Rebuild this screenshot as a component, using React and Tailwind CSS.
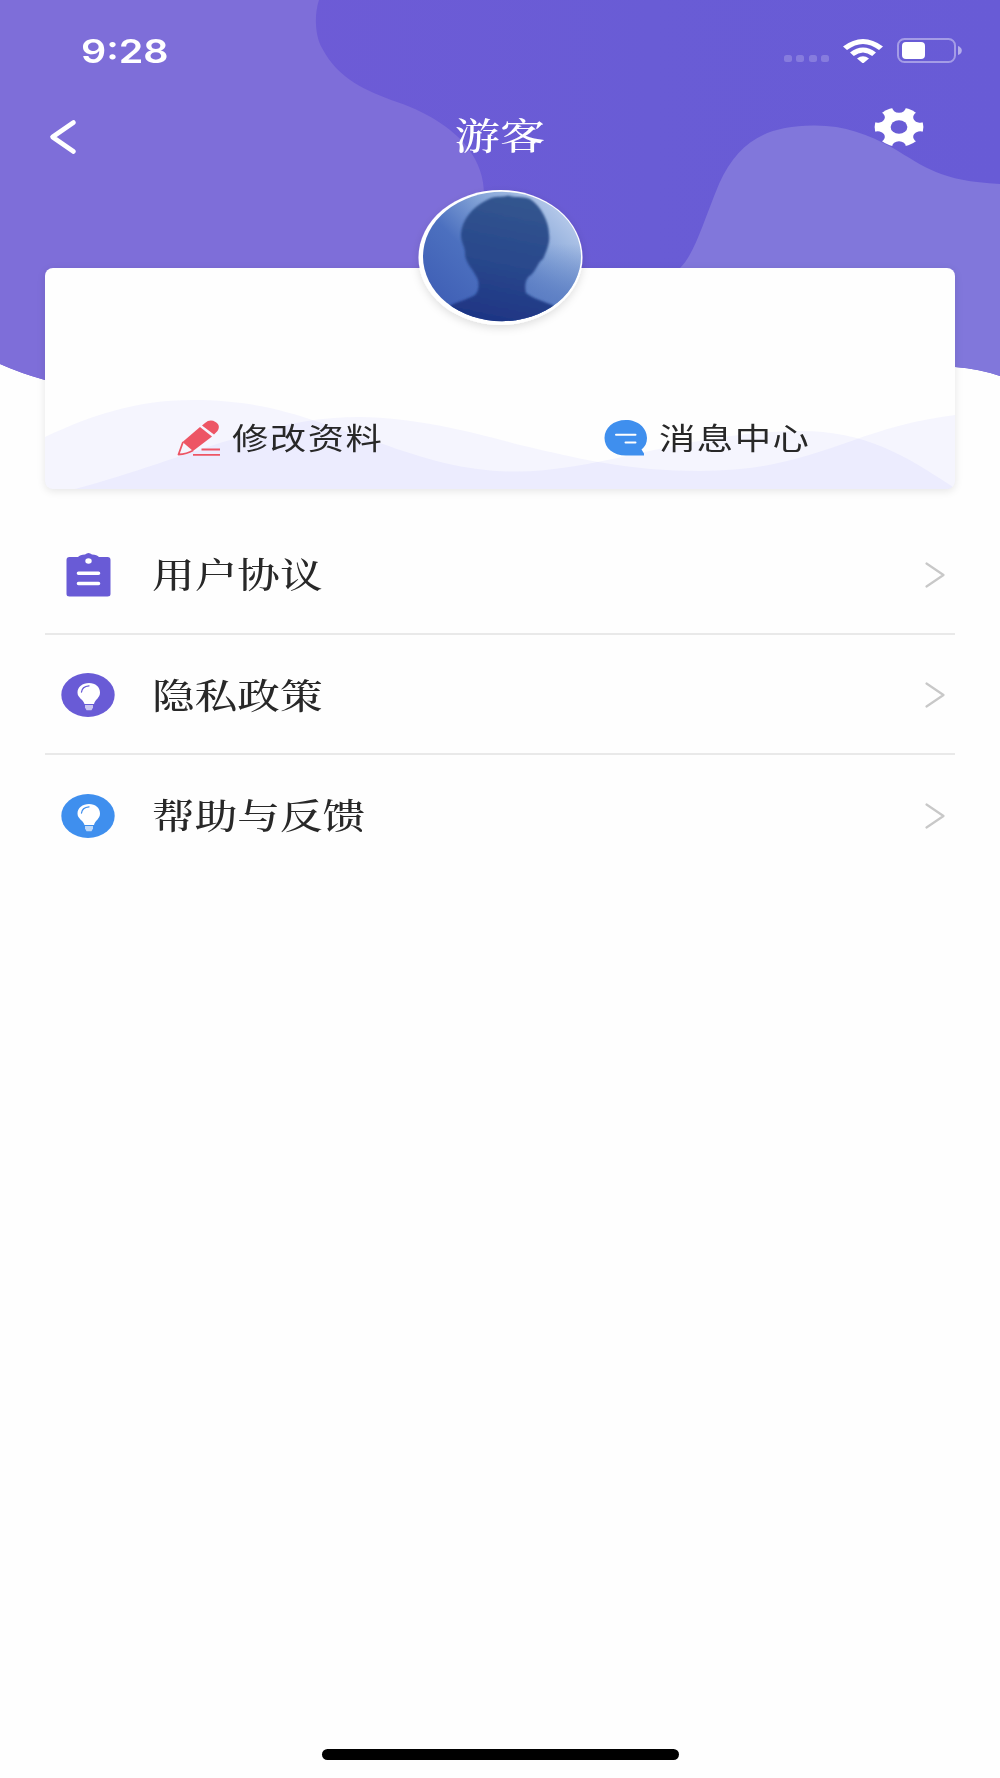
import React from 'react';

const serif = "font-['Noto_Serif_CJK_SC','Noto_Sans_CJK_SC',serif]";

const HeaderWaves = () => (
  <svg className="absolute left-0 top-0 w-[1000px] h-[400px]" viewBox="0 0 1000 400">
    <defs>
      <linearGradient id="headerBase" x1="0" x2="1" y1="0" y2="0">
        <stop offset="0.3" stopColor="#6d5bd6" />
        <stop offset="0.65" stopColor="#695cd5" />
        <stop offset="1" stopColor="#685bd6" />
      </linearGradient>
    </defs>
    <path d="M0 0H1000V376Q980 369 955 367L900 366V400H100V396L45 380Q20 373 0 364Z" fill="url(#headerBase)" />
    <path d="M0 0H319C314 15 315 36 322 48C338 79 366 91 397 102C432 114 456 132 468 148C479 163 484 178 484 195V300H100V396L45 380Q20 373 0 364Z" fill="#7e6ed9" />
    <path d="M680 268C695 253 702 225 719 184C738 142 765 126 813 125.500C843 125 868 134 893 148C925 167 940 181 1000 184V376Q980 369 955 367L680 300Z" fill="#8177db" />
  </svg>
);

const WifiIcon = () => (
  <svg className="w-10 h-6" viewBox="0 0 40 24" preserveAspectRatio="none">
    <path d="M0 7.500Q20-7.500 40 7.500L36 11Q20-1 4 11Z" fill="#fff" />
    <path d="M7 13.500Q20 3.500 33 13.500L29.200 17Q20 10 10.800 17Z" fill="#fff" />
    <path d="M14 19.500Q20 15 26 19.500L20 24.500Z" fill="#fff" />
  </svg>
);

const BatteryIcon = () => (
  <svg className="w-[66px] h-[26px]" viewBox="0 0 66 26">
    <rect x="1" y="1" width="57" height="23" rx="6.500" fill="none" stroke="#fff" strokeOpacity="0.4" strokeWidth="2" />
    <rect x="5" y="4" width="23" height="17" rx="4" fill="#fff" />
    <path d="M61 8Q64.800 9.500 64.800 12.500T61 17Z" fill="#fff" fillOpacity="0.5" />
  </svg>
);

const GearIcon = () => (
  <svg className="w-[50px] h-10" viewBox="-20.300 -20 40.600 40" preserveAspectRatio="none">
    <mask id="gearCut" maskUnits="userSpaceOnUse" x="-21" y="-21" width="42" height="42">
      <circle r="19.800" fill="#fff" />
      <circle r="6.800" fill="#000" />
      {[30, 90, 150, 210, 270, 330].map((deg) => (
        <circle key={deg} cx="19.800" r="5.600" fill="#000" transform={`rotate(${deg})`} />
      ))}
    </mask>
    <rect x="-21" y="-21" width="42" height="42" fill="#fff" mask="url(#gearCut)" />
  </svg>
);

const Avatar = () => (
  <svg className="absolute left-[364px] top-[-89px] w-[182px] h-[160px]" viewBox="409 179 182 160">
    <defs>
      <linearGradient id="sky" x1="0.1" y1="0.8" x2="0.9" y2="0.15">
        <stop offset="0" stopColor="#4060b6" />
        <stop offset="0.35" stopColor="#4c70bf" />
        <stop offset="0.65" stopColor="#83a3d7" />
        <stop offset="1" stopColor="#b9cceb" />
      </linearGradient>
      <linearGradient id="person" x1="0.6" y1="0" x2="0.4" y2="1">
        <stop offset="0" stopColor="#33568f" />
        <stop offset="0.5" stopColor="#29488c" />
        <stop offset="1" stopColor="#1d3283" />
      </linearGradient>
      <linearGradient id="rightHaze" x1="0" y1="0" x2="0" y2="1">
        <stop offset="0.4" stopColor="#5b7dc3" stopOpacity="0" />
        <stop offset="0.9" stopColor="#5b7dc3" />
      </linearGradient>
      <clipPath id="avatarClip">
        <ellipse cx="502" cy="256.500" rx="79" ry="64.700" />
      </clipPath>
      <filter id="avatarShadow" x="-20%" y="-20%" width="140%" height="140%">
        <feDropShadow dx="0" dy="3" stdDeviation="4" floodColor="#000" floodOpacity="0.12" />
      </filter>
      <filter id="soften">
        <feGaussianBlur stdDeviation="0.8" />
      </filter>
    </defs>
    <ellipse cx="500.500" cy="257.500" rx="82" ry="67.500" fill="#fff" filter="url(#avatarShadow)" />
    <g clipPath="url(#avatarClip)">
      <rect x="420" y="190" width="164" height="134" fill="url(#sky)" />
      <rect x="515" y="190" width="82" height="134" fill="url(#rightHaze)" />
      <path
        d="M440 330V311C454 302 467 300 475 295C479 291 479 285 478 280C474 270 466 264 465 255C466 248 461 243 461 236C461 221 472 207 487 200C495 195 501 198 508 195.500C515 198 522 196 530 199C541 206 549 222 549 234C550.500 243 546 252 543 259C538 262 537 269 531 275C524 279 525 289 526 293C533 299 547 302 554 306L570 330Z"
        fill="url(#person)"
        filter="url(#soften)"
      />
    </g>
  </svg>
);

const CardWaves = () => (
  <svg className="absolute left-0 bottom-0 w-full h-[92px] rounded-b-lg" viewBox="45 397 910 92" preserveAspectRatio="none">
    <path
      d="M45 437C90 416 135 400 193 400C275 400 320 424 380 443C425 459 465 471.500 515 471.500C600 471.500 690 431 800 431C865 431 905 455 953 487V489H45Z"
      fill="#5b5bff"
      fillOpacity="0.053"
    />
    <path
      d="M75 489C135 473 180 455 230 440C275 427 310 417 360 417C415 417 480 434 520 445C580 459 630 471 700 471C815 471 850 428 955 415V489Z"
      fill="#5b5bff"
      fillOpacity="0.053"
    />
  </svg>
);

const PencilIcon = () => (
  <svg className="w-[44px] h-9" viewBox="0 0 44 36">
    <path d="M25 5.500L28 3Q33-1.200 38.500 2T40.500 11L37 14.500Z" fill="#ed5565" />
    <path d="M23 7L35 16.500L16 31L5.500 22Z" fill="#ed5565" />
    <path d="M6 22L1.500 34.500Q10 34 16 30.500" fill="none" stroke="#ed5565" strokeWidth="1.800" strokeLinejoin="round" />
    <path d="M24.500 29.500H43M16 34.800H43" stroke="#ed5565" strokeWidth="1.800" />
  </svg>
);

const MessageIcon = () => (
  <svg className="w-[44px] h-9" viewBox="0 0 44 36">
    <path d="M22 0C34 0 43 8 43 18C43 23 41 27 37.500 29.500L40 33.500V35.500H22C9 35.500 0.500 28 0.500 18S9 0 22 0Z" fill="#3f8fee" />
    <path d="M12 14.700H31.500M21.500 22.500H31.500" stroke="#fff" strokeWidth="2" strokeLinecap="round" />
  </svg>
);

const ClipboardIcon = () => (
  <svg className="w-[54px] h-[44px]" viewBox="0 0 54 44">
    <path d="M8.500 4H17Q19 1.500 24 1.500Q27.500-1.500 31 1.500Q36 1.500 38 4H46.500Q49.500 4 49.500 7V41Q49.500 43.500 46.500 43.500H8.500Q5.500 43.500 5.500 41V7Q5.500 4 8.500 4Z" fill="#695bd6" />
    <ellipse cx="27.500" cy="8" rx="3.200" ry="2.700" fill="#fff" />
    <path d="M17.500 20.200H37.500M17.500 30.500H37.500" stroke="#fff" strokeWidth="3.600" strokeLinecap="round" />
  </svg>
);

const BulbIcon = ({ color }) => (
  <svg className="w-[54px] h-[44px]" viewBox="0 0 54 44">
    <ellipse cx="27" cy="22" rx="26.700" ry="21.900" fill={color} />
    <path d="M28 10C34.500 10 39 14 39 19.500C39 25 34 26.500 33 31H23.500C22.500 26.500 16.500 25 16.500 19.500C16.500 14 21.500 10 28 10Z" fill="#fff" />
    <path d="M20.500 19Q21 13.500 28 12.800" fill="none" stroke={color} strokeWidth="1.300" strokeLinecap="round" />
    <path d="M24 32H32V34.500L30.500 37.200H25.500L24 34.500Z" fill="#fff" fillOpacity="0.65" />
  </svg>
);

const menuItems = [
  { label: '用户协议', icon: <ClipboardIcon /> },
  { label: '隐私政策', icon: <BulbIcon color="#695bd6" /> },
  { label: '帮助与反馈', icon: <BulbIcon color="#3f8fee" /> },
];

const MenuRow = ({ label, icon, last }) => (
  <div className={`flex items-center h-[120.400px] pt-[3px] pl-4 pr-[10px] border-b-2 ${last ? 'border-transparent' : 'border-[#e9e9e9]'}`}>
    {icon}
    <span className={`ml-[37px] mb-[3px] text-[34.800px] leading-none font-medium text-[#282828] origin-left scale-x-[1.225] ${serif}`}>{label}</span>
    <svg className="ml-auto w-5 h-[26px]" viewBox="0 0 20 26">
      <path d="M1.500 1.500L18.500 13L1.500 24.500" fill="none" stroke="#c8c8c8" strokeWidth="2.200" strokeLinecap="round" strokeLinejoin="round" />
    </svg>
  </div>
);

const CardAction = ({ label, icon }) => (
  <div className="relative flex items-center w-[427px] h-[102px] pl-[132px]">
    {icon}
    <span className="ml-[11px] mb-1 text-[30px] leading-none tracking-[1.200px] text-[#282828] origin-left scale-x-[1.212] whitespace-nowrap font-['Noto_Sans_CJK_SC',sans-serif]">{label}</span>
  </div>
);

const App = () => {
  return (
    <div className="relative flex flex-col w-[1000px] h-[1778px] bg-[#fefefe] overflow-hidden">
      <HeaderWaves />

      {/* Status bar */}
      <div className="relative flex items-center justify-between h-[100px] pl-[81px] pr-[37px]">
        <span className="mt-[2px] text-[33px] leading-none font-semibold text-white origin-left scale-x-[1.195] font-['Inter',sans-serif]">9:28</span>
        <div className="flex items-center mt-px">
          <div className="flex gap-[4.500px] mt-4 mr-[14px]">
            {[0, 1, 2, 3].map((i) => (
              <span key={i} className="w-2 h-[7px] rounded-[2.500px] bg-white/20"></span>
            ))}
          </div>
          <WifiIcon />
          <div className="ml-[14px]">
            <BatteryIcon />
          </div>
        </div>
      </div>

      {/* Title bar */}
      <div className="relative grid grid-cols-3 h-[168px] pl-[48px] pr-[76px]">
        <svg className="mt-[19px] w-[30px] h-9" viewBox="0 0 30 36">
          <path d="M25.500 3.500L4.500 18L25.500 32.500" fill="none" stroke="#fff" strokeWidth="4.600" strokeLinecap="round" strokeLinejoin="round" />
        </svg>
        <h1 className={`mt-[16px] ml-[28px] text-center text-[37px] leading-none font-medium text-white scale-x-[1.220] ${serif}`}>游客</h1>
        <div className="mt-[7px] justify-self-end">
          <GearIcon />
        </div>
      </div>

      {/* Profile card */}
      <section className="relative flex items-end mx-[45px] h-[221px] rounded-lg bg-[#fefefe] shadow-[0_2px_8px_rgba(0,0,0,0.1)]">
        <CardWaves />
        <Avatar />
        <CardAction label="修改资料" icon={<PencilIcon />} />
        <CardAction label="消息中心" icon={<MessageIcon />} />
      </section>

      {/* Menu */}
      <nav className="mx-[45px] mt-[25.400px]">
        {menuItems.map((item, i) => (
          <MenuRow key={item.label} {...item} last={i === menuItems.length - 1} />
        ))}
      </nav>

      <div className="mt-auto mb-[18px] mx-auto w-[357px] h-[11px] rounded-full bg-black"></div>
    </div>
  );
};

export default App;
